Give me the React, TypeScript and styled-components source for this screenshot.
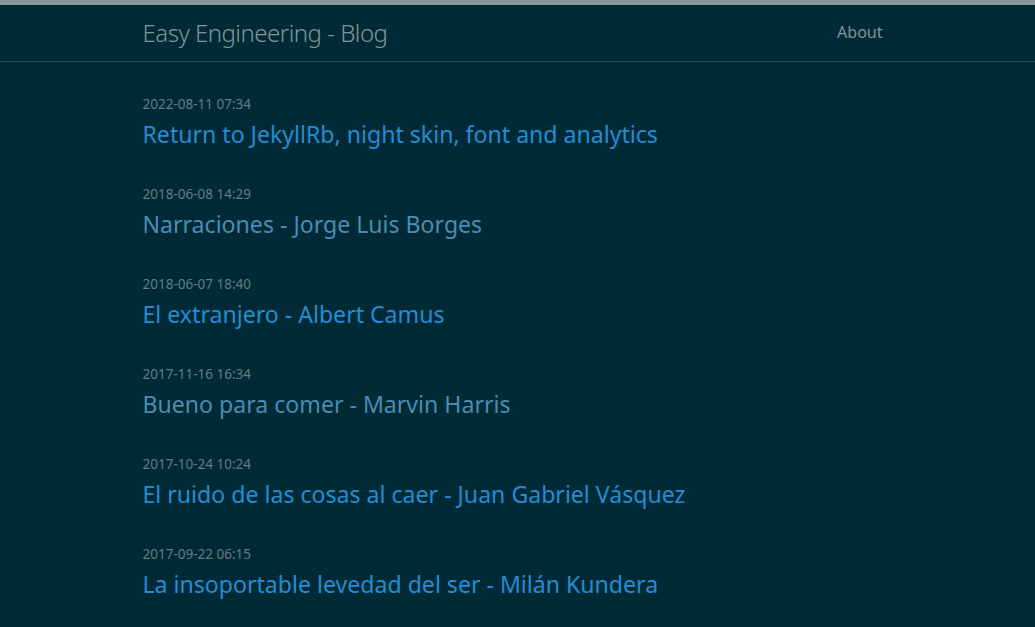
import React from "react";
import styled, { createGlobalStyle } from "styled-components";

const Global = createGlobalStyle`
  html, body { margin: 0; padding: 0; background: #002b36; }
  body { font-family: "Noto Sans", "Open Sans", sans-serif; }
`;

const Page = styled.div`
  min-height: 627px;
  background: #002b36;
  border-top: 5px solid #8a9a9c;
`;

const Header = styled.header`
  border-bottom: 1px solid #2a4a53;
`;

const Wrapper = styled.div`
  width: 750px;
  margin: 0 auto;
  box-sizing: border-box;
`;

const HeaderInner = styled(Wrapper)`
  display: flex;
  justify-content: space-between;
  align-items: center;
  height: 56px;
  padding-right: 10px;
`;

const SiteTitle = styled.a`
  font-size: 24px;
  font-weight: 300;
  color: #839496;
  text-decoration: none;
  letter-spacing: -0.5px;
  margin-top: -2px;
`;

const NavLink = styled.a`
  font-size: 16px;
  color: #839496;
  text-decoration: none;
  margin-top: -3px;
`;

const PostList = styled.ul`
  list-style: none;
  margin: 0;
  padding: 33px 0 0;
  display: flex;
  flex-direction: column;
  gap: 35px;
`;

const Post = styled.li`
  display: flex;
  flex-direction: column;
  gap: 5px;
`;

const PostDate = styled.span`
  font-size: 13.5px;
  line-height: 18px;
  color: #657b83;
`;

const PostLink = styled.a<{ $visited?: boolean }>`
  font-size: 23.1px;
  line-height: 32px;
  color: ${(p) => (p.$visited ? "#4c8cb3" : "#268bd2")};
  text-decoration: none;
`;

const posts = [
  { date: "2022-08-11 07:34", title: "Return to JekyllRb, night skin, font and analytics", visited: false },
  { date: "2018-06-08 14:29", title: "Narraciones - Jorge Luis Borges", visited: true },
  { date: "2018-06-07 18:40", title: "El extranjero - Albert Camus", visited: false },
  { date: "2017-11-16 16:34", title: "Bueno para comer - Marvin Harris", visited: true },
  { date: "2017-10-24 10:24", title: "El ruido de las cosas al caer - Juan Gabriel Vásquez", visited: false },
  { date: "2017-09-22 06:15", title: "La insoportable levedad del ser - Milán Kundera", visited: false },
];

export default function App() {
  return (
    <>
      <Global />
      <Page>
        <Header>
          <HeaderInner>
            <SiteTitle href="#">Easy Engineering - Blog</SiteTitle>
            <NavLink href="#">About</NavLink>
          </HeaderInner>
        </Header>
        <Wrapper>
          <PostList>
            {posts.map((p) => (
              <Post key={p.date}>
                <PostDate>{p.date}</PostDate>
                <PostLink href="#" $visited={p.visited}>{p.title}</PostLink>
              </Post>
            ))}
          </PostList>
        </Wrapper>
      </Page>
    </>
  );
}
